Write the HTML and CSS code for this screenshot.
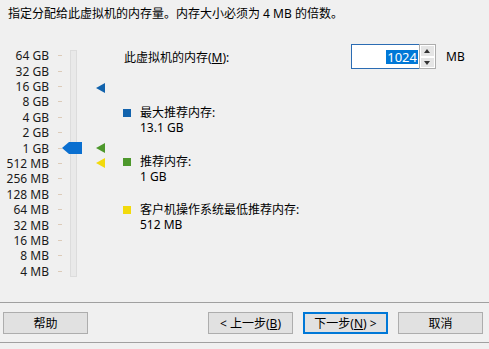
FILE: index.html
```html
<!DOCTYPE html>
<html lang="zh-CN">
<head>
    <meta charset="UTF-8">
    <title>内存</title>
    <link rel="stylesheet" href="styles.css">
</head>
<body>
    <p class="intro">指定分配给此虚拟机的内存量。内存大小必须为 4 MB 的倍数。</p>

    <div class="content">
        <div class="scale">
            <div class="scale-labels">
                <div class="step">64 GB<span class="tick"></span></div>
                <div class="step">32 GB<span class="tick"></span></div>
                <div class="step">16 GB<span class="tick"></span></div>
                <div class="step">8 GB<span class="tick"></span></div>
                <div class="step">4 GB<span class="tick"></span></div>
                <div class="step">2 GB<span class="tick"></span></div>
                <div class="step">1 GB<span class="tick"></span></div>
                <div class="step">512 MB<span class="tick"></span></div>
                <div class="step">256 MB<span class="tick"></span></div>
                <div class="step">128 MB<span class="tick"></span></div>
                <div class="step">64 MB<span class="tick"></span></div>
                <div class="step">32 MB<span class="tick"></span></div>
                <div class="step">16 MB<span class="tick"></span></div>
                <div class="step">8 MB<span class="tick"></span></div>
                <div class="step">4 MB<span class="tick"></span></div>
            </div>

            <div class="scale-track">
                <div class="track"></div>
                <svg class="thumb" width="20" height="12" viewBox="0 0 20 12">
                    <polygon points="0,6 7,0 20,0 20,12 7,12" fill="#0a6fd0"/>
                </svg>
            </div>

            <div class="scale-marks">
                <svg class="mark mark-max" width="9" height="10" viewBox="0 0 9 10">
                    <polygon points="0,5 9,0 9,10" fill="#1263ad"/>
                </svg>
                <svg class="mark mark-rec" width="9" height="10" viewBox="0 0 9 10">
                    <polygon points="0,5 9,0 9,10" fill="#4d982c"/>
                </svg>
                <svg class="mark mark-min" width="9" height="10" viewBox="0 0 9 10">
                    <polygon points="0,5 9,0 9,10" fill="#f2da0c"/>
                </svg>
            </div>
        </div>

        <div class="pane">
            <div class="memory-row">
                <label class="memory-label">此虚拟机的内存(<u>M</u>):</label>
                <div class="spin-box">
                    <div class="spin-value"><span class="selected">1024</span></div>
                    <div class="spin-buttons">
                        <span class="spin-up"></span>
                        <span class="spin-down"></span>
                    </div>
                </div>
                <span class="unit">MB</span>
            </div>

            <div class="legend">
                <div class="legend-item">
                    <span class="swatch swatch-max"></span>
                    <div>
                        <div class="legend-line">最大推荐内存:</div>
                        <div class="legend-line">13.1 GB</div>
                    </div>
                </div>
                <div class="legend-item">
                    <span class="swatch swatch-rec"></span>
                    <div>
                        <div class="legend-line">推荐内存:</div>
                        <div class="legend-line">1 GB</div>
                    </div>
                </div>
                <div class="legend-item">
                    <span class="swatch swatch-min"></span>
                    <div>
                        <div class="legend-line">客户机操作系统最低推荐内存:</div>
                        <div class="legend-line">512 MB</div>
                    </div>
                </div>
            </div>
        </div>
    </div>

    <div class="footer">
        <button class="btn">帮助</button>
        <div class="nav-buttons">
            <button class="btn">&lt; 上一步(<u>B</u>)</button>
            <button class="btn btn-default">下一步(<u>N</u>) &gt;</button>
            <button class="btn">取消</button>
        </div>
    </div>
</body>
</html>
```

FILE: styles.css
```css
body {
    margin: 0;
    width: 489px;
    height: 349px;
    overflow: hidden;
    background-color: #f0f0f0;
    color: #000;
    font-family: "Noto Sans", "Noto Sans CJK SC", sans-serif;
    font-size: 12px;
}

.intro {
    margin: 0;
    padding: 6px 8px 0;
    height: 16px;
    line-height: 16px;
}

.content {
    display: flex;
    height: 280px;
}

/* slider */

.scale {
    display: flex;
    padding-top: 26px;
}

.scale-labels {
    width: 62px;
}

.step {
    display: flex;
    justify-content: flex-end;
    align-items: center;
    height: 15.4px;
    color: #1a1a1a;
}

.tick {
    width: 4px;
    height: 1px;
    margin-left: 9px;
    background: #dccbb9;
}

.scale-track,
.scale-marks {
    display: grid;
    grid-template-rows: repeat(15, 15.4px);
}

.scale-track {
    width: 20px;
}

.track {
    grid-row: 1 / -1;
    grid-column: 1;
    justify-self: start;
    margin: 2px 0 2px 8px;
    width: 5px;
    border: 1px solid #dcdcdc;
    background: #e9e9e9;
}

.thumb {
    grid-row: 7;
    grid-column: 1;
    align-self: center;
}

.scale-marks {
    margin-left: 14px;
    width: 9px;
}

.mark {
    align-self: center;
}

.mark-max {
    grid-row: 3;
    transform: translateY(2px);
}

.mark-rec {
    grid-row: 7;
}

.mark-min {
    grid-row: 8;
}

/* right side */

.pane {
    flex: 1;
    padding-left: 18px;
}

.memory-row {
    display: flex;
    align-items: center;
    margin-top: 22px;
    height: 25px;
}

.memory-label {
    width: 227px;
    padding-left: 1px;
}

.spin-box {
    display: flex;
    height: 25px;
}

.spin-value {
    width: 66px;
    display: flex;
    justify-content: flex-end;
    align-items: center;
    padding-right: 1px;
    background: #fff;
    border: 1px solid #2b6cb3;
    border-right: none;
}

.selected {
    background: #0078d7;
    color: #fff;
    padding: 0 1px;
    line-height: 14px;
    font-size: 13px;
}

.spin-buttons {
    display: flex;
    flex-direction: column;
    width: 15px;
    border: 1px solid #adadad;
    background: #fff;
}

.spin-up,
.spin-down {
    flex: 1;
    margin: 1px;
    background: #e5e5e5;
    position: relative;
}

.spin-up::after,
.spin-down::after {
    content: "";
    position: absolute;
    left: 3px;
    top: 3px;
    border-left: 3.5px solid transparent;
    border-right: 3.5px solid transparent;
}

.spin-up::after {
    border-bottom: 4px solid #333;
}

.spin-down::after {
    border-top: 4px solid #333;
}

.unit {
    margin-left: 10px;
}

.legend {
    margin-top: 36px;
}

.legend-item {
    display: flex;
    align-items: flex-start;
    margin-bottom: 18.5px;
}

.legend-line {
    height: 15px;
    line-height: 15px;
}

.swatch {
    width: 8px;
    height: 8px;
    margin: 4px 9px 0 0;
    flex: none;
}

.swatch-max {
    background: #1263ad;
}

.swatch-rec {
    background: #4d982c;
}

.swatch-min {
    background: #f2da0c;
}

/* footer */

.footer {
    display: flex;
    justify-content: space-between;
    align-items: center;
    height: 39px;
    padding: 0 6px 0 3px;
    border-top: 1px solid #a0a0a0;
    border-bottom: 1px solid #a0a0a0;
}

.nav-buttons {
    display: flex;
    gap: 10px;
}

.btn {
    width: 85px;
    height: 22px;
    padding: 0;
    background: #e1e1e1;
    border: 1px solid #adadad;
    font-family: inherit;
    font-size: 12px;
    color: #000;
}

.btn-default {
    border: 2px solid #0078d7;
}
```
